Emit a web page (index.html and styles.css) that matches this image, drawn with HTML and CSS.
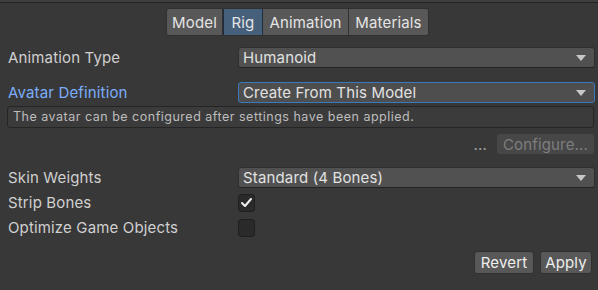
FILE: index.html
```html
<!DOCTYPE html>
<html lang="en">

<head>
    <meta charset="UTF-8">
    <meta name="viewport" content="width=device-width, initial-scale=1.0">
    <title>Rig Import Settings</title>
    <link rel="stylesheet" href="styles.css">
</head>

<body>

    <div class="top-strip"></div>

    <div class="tabs">
        <button class="tab tab-model">Model</button>
        <button class="tab tab-rig active">Rig</button>
        <button class="tab tab-anim">Animation</button>
        <button class="tab tab-mat">Materials</button>
    </div>

    <div class="row row-first">
        <div class="label">Animation Type</div>
        <div class="dropdown">
            <span>Humanoid</span>
            <span class="arrow"></span>
        </div>
    </div>

    <div class="row row-avatar">
        <div class="label label-blue">Avatar Definition</div>
        <div class="dropdown focused">
            <span>Create From This Model</span>
            <span class="arrow"></span>
        </div>
    </div>

    <div class="helpbox">The avatar can be configured after settings have been applied.</div>

    <div class="configure-row">
        <span class="dots">...</span>
        <button class="button configure" disabled>Configure...</button>
    </div>

    <div class="row row-skin">
        <div class="label">Skin Weights</div>
        <div class="dropdown">
            <span>Standard (4 Bones)</span>
            <span class="arrow"></span>
        </div>
    </div>

    <div class="row row-check row-strip">
        <div class="label">Strip Bones</div>
        <div class="checkbox">
            <svg width="13" height="11" viewBox="0 0 13 11">
                <path d="M2 6 L5 9 L11 2" fill="none" stroke="#f0f0f0" stroke-width="2" stroke-linecap="round" stroke-linejoin="round" />
            </svg>
        </div>
    </div>

    <div class="row row-check">
        <div class="label">Optimize Game Objects</div>
        <div class="checkbox"></div>
    </div>

    <div class="actions">
        <button class="button revert">Revert</button>
        <button class="button apply">Apply</button>
    </div>

</body>

</html>
```

FILE: styles.css
```css
/* Basic Reset */
* {
    box-sizing: border-box;
    margin: 0;
    padding: 0;
}

body {
    width: 598px;
    height: 290px;
    overflow: hidden;
    background-color: #383838;
    color: #d0d0d0;
    font-family: Inter, "Noto Sans", sans-serif;
    font-size: 15px;
    letter-spacing: 0.15px;
}

button {
    font-family: inherit;
    font-size: inherit;
    letter-spacing: inherit;
}

.top-strip {
    height: 3px;
    background-color: #3e3e3e;
    border-bottom: 1px solid #232323;
}

/* Tabs */
.tabs {
    display: flex;
    margin: 5px 0 0 166px;
    width: 263px;
    height: 28px;
    border: 1px solid #303030;
    border-radius: 3px;
    overflow: hidden;
}

.tab {
    height: 100%;
    border: none;
    border-right: 1px solid #303030;
    background-color: #585858;
    color: #e4e4e4;
    text-align: center;
    cursor: pointer;
}

.tab:last-child {
    border-right: none;
}

.tab.active {
    background-color: #46607c;
    border: 1px solid #1e2d3d;
    border-top: none;
    border-bottom: none;
}

.tab-model { width: 56px; }
.tab-rig { width: 40px; }
.tab-anim { width: 86px; }
.tab-mat { flex: 1; }

/* Property rows */
.row {
    display: flex;
    align-items: center;
    height: 21px;
    padding: 0 3px 0 8px;
}

.row-first { margin-top: 11px; }
.row-avatar { margin-top: 14px; }
.row-skin { margin-top: 13px; }

.row-check {
    height: 25px;
}

.row-strip {
    margin-top: 2px;
}

.label {
    width: 230px;
    flex-shrink: 0;
    line-height: 21px;
}

.label-blue {
    color: #7baefa;
}

.dropdown {
    flex: 1;
    height: 21px;
    display: flex;
    align-items: center;
    justify-content: space-between;
    padding: 0 8px 0 4px;
    background-color: #515151;
    border: 1px solid #303030;
    border-bottom-color: #242424;
    border-radius: 3px;
    color: #e2e2e2;
}

.dropdown.focused {
    border-color: #3a79bb;
    background-color: #4e4e4e;
}

.arrow {
    width: 0;
    height: 0;
    border-left: 5px solid transparent;
    border-right: 5px solid transparent;
    border-top: 6px solid #c8c8c8;
}

.helpbox {
    margin: 3px 4px 0 7px;
    height: 22px;
    padding: 0 5px;
    line-height: 20px;
    background-color: #3b3b3b;
    border: 1px solid #252525;
    border-radius: 3px;
    color: #bdbdbd;
    font-size: 12.5px;
    letter-spacing: 0.5px;
}

.configure-row {
    display: flex;
    align-items: center;
    justify-content: flex-end;
    gap: 10px;
    margin-top: 6px;
    padding-right: 4px;
    height: 20px;
}

.dots {
    color: #a0a0a0;
}

.button {
    height: 100%;
    border: 1px solid #303030;
    border-radius: 3px;
    background-color: #585858;
    color: #eeeeee;
    cursor: pointer;
}

.button.configure {
    width: 97px;
    border: none;
    background-color: #474747;
    color: #7e7e7e;
    cursor: default;
}

.checkbox {
    width: 17px;
    height: 18px;
    display: flex;
    align-items: center;
    justify-content: center;
    background-color: #2a2a2a;
    border: 1px solid #1f1f1f;
    border-radius: 3px;
}

/* Bottom buttons */
.actions {
    display: flex;
    justify-content: flex-end;
    gap: 6px;
    margin-top: 11px;
    padding-right: 6px;
    height: 23px;
}

.button.revert { width: 60px; }
.button.apply { width: 52px; }
```
